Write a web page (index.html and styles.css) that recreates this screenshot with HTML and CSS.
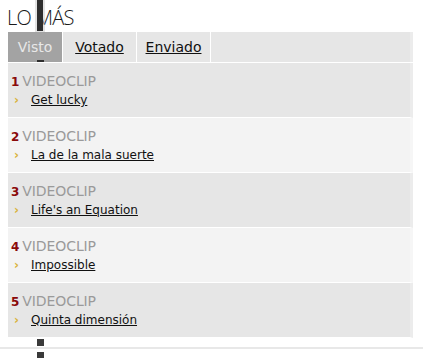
FILE: index.html
```html
<!DOCTYPE html>
<html lang="es">
<head>
<meta charset="utf-8">
<link rel="stylesheet" href="styles.css">
</head>
<body>
<div class="page">
  <div class="rail rail-top"></div>
  <div class="rail rail-dash"></div>
  <h2 class="title">LO MÁS</h2>
  <div class="box">
    <ul class="tabs">
      <li class="tab tab-visto active"><span>Visto</span></li>
      <li class="tab"><a href="#">Votado</a></li>
      <li class="tab"><a href="#">Enviado</a></li>
      <li class="tab-fill"></li>
    </ul>
    <ol class="list">
      <li class="item"><div class="meta"><b class="num">1</b><span class="kind">VIDEOCLIP</span></div><div class="link"><span class="arrow">›</span><a href="#">Get lucky</a></div></li>
      <li class="item alt"><div class="meta"><b class="num">2</b><span class="kind">VIDEOCLIP</span></div><div class="link"><span class="arrow">›</span><a href="#">La de la mala suerte</a></div></li>
      <li class="item"><div class="meta"><b class="num">3</b><span class="kind">VIDEOCLIP</span></div><div class="link"><span class="arrow">›</span><a href="#">Life's an Equation</a></div></li>
      <li class="item alt"><div class="meta"><b class="num">4</b><span class="kind">VIDEOCLIP</span></div><div class="link"><span class="arrow">›</span><a href="#">Impossible</a></div></li>
      <li class="item"><div class="meta"><b class="num">5</b><span class="kind">VIDEOCLIP</span></div><div class="link"><span class="arrow">›</span><a href="#">Quinta dimensión</a></div></li>
    </ol>
  </div>
  <div class="footer-line"></div>
  <div class="rail rail-b1"></div>
  <div class="rail rail-b2"></div>
</div>
</body>
</html>
```
FILE: styles.css
```css
html, body {
  margin: 0;
  padding: 0;
  background: #fff;
}
.page {
  position: relative;
  width: 423px;
  height: 358px;
  overflow: hidden;
  font-family: "DejaVu Sans", Verdana, sans-serif;
}
.title {
  margin: 0;
  padding: 5px 0 0 7px;
  height: 27px;
  font-family: "Open Sans", sans-serif;
  font-weight: 300;
  font-size: 20px;
  line-height: 25px;
  color: #1a1a1a;
  letter-spacing: -0.7px;
}
.box {
  margin-left: 8px;
  width: 405px;
  position: relative;
  z-index: 1;
}
.tabs {
  list-style: none;
  margin: 0;
  padding: 0;
  display: flex;
  height: 30px;
  border-bottom: 1px solid #fff;
}
.tab {
  background: #e6e6e6;
  border-right: 1px solid #fff;
  display: flex;
  align-items: center;
  justify-content: center;
  width: 73px;
  font-size: 14px;
}
.tab a {
  color: #111;
  text-decoration: underline;
}
.tab.tab-visto {
  width: 54px;
}
.tab.active {
  background: #a3a3a3;
}
.tab.active span {
  color: #e8e8e8;
}
.tab-fill {
  flex: 1;
  background: #e6e6e6;
  border-right: 3px solid #ececec;
}
.list {
  list-style: none;
  margin: 0;
  padding: 0;
}
.item {
  height: 54px;
  border-bottom: 1px solid #fff;
  background: #e6e6e6;
  padding: 0 0 0 3px;
  box-sizing: content-box;
  border-right: 3px solid #ececec;
}
.item.alt {
  background: #f3f3f3;
  border-right-color: #f6f6f6;
}
.meta {
  display: flex;
  align-items: baseline;
  gap: 3px;
  padding-top: 10px;
  line-height: 16px;
}
.kind {
  font-size: 14px;
  color: #9a9a9a;
  letter-spacing: -0.1px;
}
.num {
  color: #8a0a0a;
  font-weight: bold;
  font-size: 12px;
}
.link {
  display: flex;
  align-items: center;
  margin-top: 2px;
  font-size: 12px;
  line-height: 16px;
}
.arrow {
  width: 17px;
  padding-left: 3px;
  font-size: 12px;
  font-weight: bold;
  color: #d9b23a;
  line-height: 16px;
}
.link a {
  color: #111;
  text-decoration: underline;
}
.footer-line {
  position: absolute;
  left: 0;
  right: 0;
  top: 347px;
  height: 2px;
  background: #e8e8e8;
}
.rail {
  position: absolute;
  left: 37px;
  width: 6px;
  background: #2e2e2e;
}
.rail-top {
  top: 0;
  height: 31px;
  box-shadow: 0 0 0 2px rgba(200,200,200,0.5);
}
.rail-dash {
  top: 60px;
  height: 2px;
  z-index: 2;
  width: 7px;
}
.rail-b1 {
  top: 339px;
  height: 7px;
  width: 7px;
  background: #3a3a3a;
}
.rail-b2 {
  top: 352px;
  height: 6px;
  width: 7px;
  background: #3a3a3a;
}
```
